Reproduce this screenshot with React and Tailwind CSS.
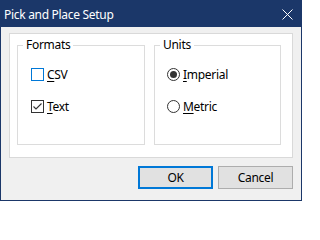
import React from 'react';

const font = { fontFamily: '"Noto Sans", "Open Sans", sans-serif' };

const CheckBox = ({ checked, focused }) => (
  <span
    className={`w-[13px] h-[13px] bg-white border flex items-center justify-center ${
      focused ? 'border-[#0078d7]' : 'border-[#333333]'
    }`}
  >
    {checked && (
      <svg width="11" height="11" viewBox="0 0 11 11">
        <path d="M1.5 5.5 L4 8 L9.5 2.5" fill="none" stroke="#333333" strokeWidth="1.1" />
      </svg>
    )}
  </span>
);

const Radio = ({ checked }) => (
  <span className="w-[13px] h-[13px] rounded-full bg-white border border-[#333333] flex items-center justify-center">
    {checked && <span className="w-[7px] h-[7px] rounded-full bg-[#333333]" />}
  </span>
);

const GroupBox = ({ title, className, children }) => (
  <div className={`relative border border-[#dcdcdc] h-[100px] ${className}`}>
    <span className="absolute left-[5px] top-[-9px] bg-white px-[3px] leading-[15px] text-[#000]">
      {title}
    </span>
    <div className="flex flex-col gap-[19px] pt-[22px]">{children}</div>
  </div>
);

const Option = ({ control, label, hotkey }) => (
  <label className="flex items-center gap-[3px] h-[13px] leading-[15px]">
    {control}
    <span>
      <u className="underline-offset-2">{hotkey}</u>
      {label}
    </span>
  </label>
);

export default function App() {
  return (
    <div
      className="w-[302px] h-[201px] border border-[#1b3769] bg-[#f0f0f0] flex flex-col text-[12px] tracking-[-0.3px] text-black"
      style={font}
    >
      {/* title bar */}
      <div className="h-[26px] bg-[#1b3769] flex items-center justify-between pl-[3px] pr-[8px]">
        <span className="text-white text-[12px] leading-[15px] pt-[1px]">Pick and Place Setup</span>
        <svg width="11" height="11" viewBox="0 0 11 11">
          <path d="M0.5 0.5 L10.5 10.5 M10.5 0.5 L0.5 10.5" stroke="#ffffff" strokeWidth="1" />
        </svg>
      </div>

      {/* body */}
      <div className="flex-1 px-[8px] pt-[6px] flex flex-col">
        <div className="h-[125px] bg-white border border-[#d9d9d9] flex pl-[7px] pt-[11px] gap-[9px]">
          <GroupBox title="Formats" className="w-[128px] pl-[13px]">
            <Option control={<CheckBox focused />} hotkey="C" label="SV" />
            <Option control={<CheckBox checked />} hotkey="T" label="ext" />
          </GroupBox>
          <GroupBox title="Units" className="w-[127px] pl-[12px]">
            <Option control={<Radio checked />} hotkey="I" label="mperial" />
            <Option control={<Radio />} hotkey="M" label="etric" />
          </GroupBox>
        </div>

        <div className="flex justify-end gap-[5px] mt-[8px]">
          <button className="w-[75px] h-[23px] bg-[#e1e1e1] border-2 border-[#0078d7] leading-[15px]">
            OK
          </button>
          <button className="w-[75px] h-[23px] bg-[#e1e1e1] border border-[#adadad] leading-[15px]">
            Cancel
          </button>
        </div>
      </div>
    </div>
  );
}
